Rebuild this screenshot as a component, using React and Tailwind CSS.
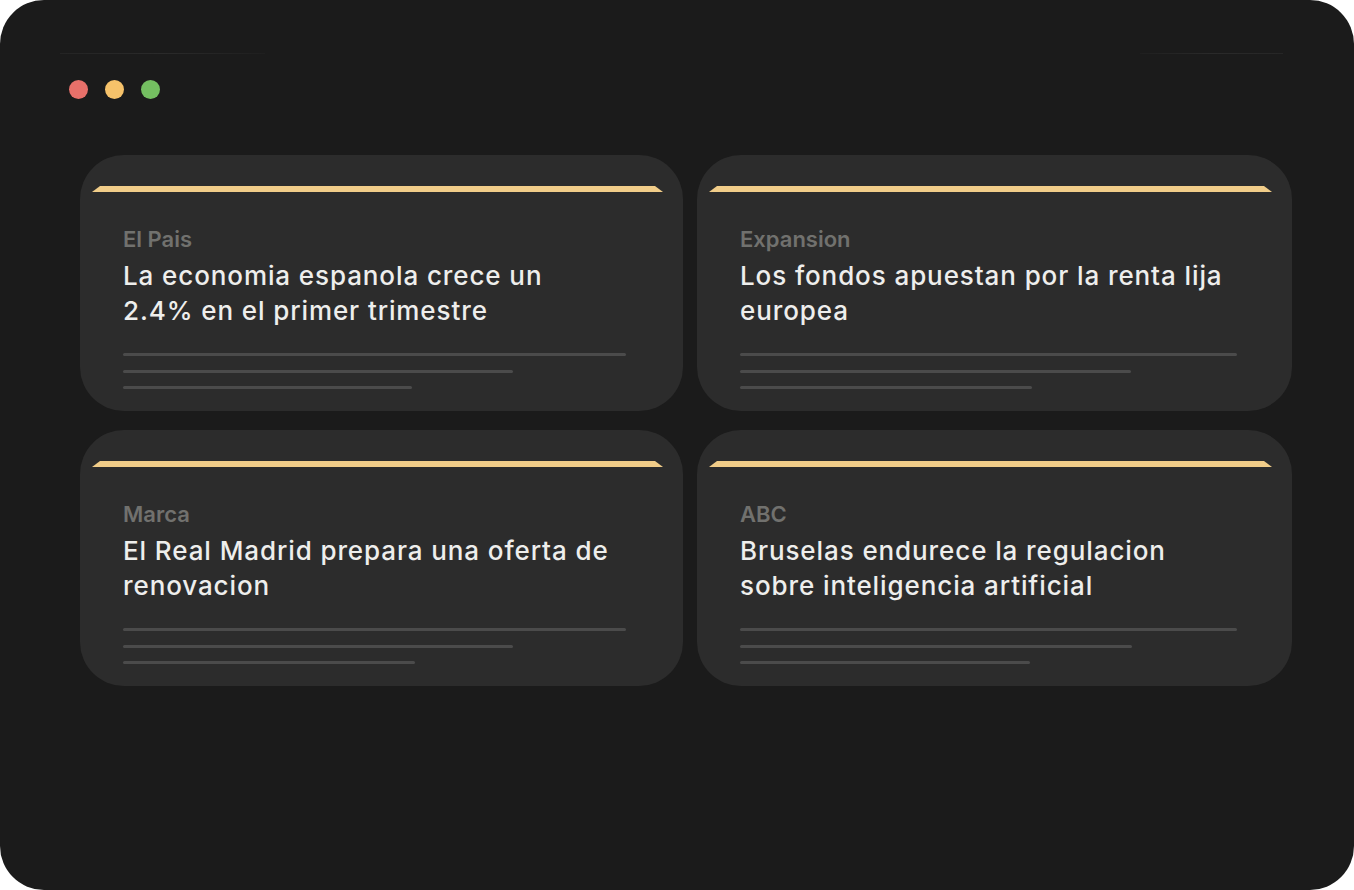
import React from 'react';

const cards = [
  { source: 'El Pais', lines: ['La economia espanola crece un', '2.4% en el primer trimestre'], bars: [503, 390, 289] },
  { source: 'Expansion', lines: ['Los fondos apuestan por la renta lija', 'europea'], bars: [497, 391, 292] },
  { source: 'Marca', lines: ['El Real Madrid prepara una oferta de', 'renovacion'], bars: [503, 390, 292] },
  { source: 'ABC', lines: ['Bruselas endurece la regulacion', 'sobre inteligencia artificial'], bars: [497, 392, 290] },
];

const NewsCard = ({ source, lines, bars }) => (
  <div className="h-[256px] rounded-[44px] bg-[#2c2c2c] pt-[31px] pl-[12px] pr-[20px]">
    {/* gold top strip with slanted ends */}
    <div
      className="h-[6px] bg-[#f1cd89]"
      style={{ clipPath: 'polygon(8px 0, calc(100% - 8px) 0, 100% 100%, 0 100%)' }}
    />
    <div className="pl-[31px] pr-[20px] pt-[35px]">
      <div className="text-[22px] leading-[24px] font-semibold text-[#71716e]">{source}</div>
      <h3 className="mt-[7px] text-[26px] leading-[35px] font-medium text-[#eeeeec] tracking-[0.9px] whitespace-nowrap">
        {lines[0]}
        <br />
        {lines[1]}
      </h3>
      <div className="mt-[25px] flex flex-col gap-[13.5px]">
        {bars.map((w, i) => (
          <div key={i} className="h-[3px] rounded-full bg-[#4b4b4b]" style={{ width: w }} />
        ))}
      </div>
    </div>
  </div>
);

export default function App() {
  return (
    <div className="w-[1354px] h-[890px] bg-white" style={{ fontFamily: 'Inter, "Noto Sans", sans-serif' }}>
      <div className="h-full rounded-[44px] bg-[#1b1b1b] overflow-hidden">
        <div className="flex justify-between pt-[53px] pl-[60px] pr-[71px]">
          <div className="h-px w-[205px] bg-gradient-to-r from-[#242424] via-[#2a2a2a] to-[#1f1f1f]" />
          <div className="h-px w-[143px] bg-gradient-to-r from-[#1f1f1f] via-[#2a2a2a] to-[#262626]" />
        </div>
        <div className="flex gap-[17px] pl-[69px] pt-[26px]">
          <span className="w-[19px] h-[19px] rounded-full bg-[#e8706a]" />
          <span className="w-[19px] h-[19px] rounded-full bg-[#f6c26a]" />
          <span className="w-[19px] h-[19px] rounded-full bg-[#74bf61]" />
        </div>
        <div className="grid grid-cols-[603px_595px] gap-x-[14px] gap-y-[19px] pl-[80px] pt-[56px]">
          {cards.map((c, i) => (
            <NewsCard key={i} source={c.source} lines={c.lines} bars={c.bars} />
          ))}
        </div>
      </div>
    </div>
  );
}
